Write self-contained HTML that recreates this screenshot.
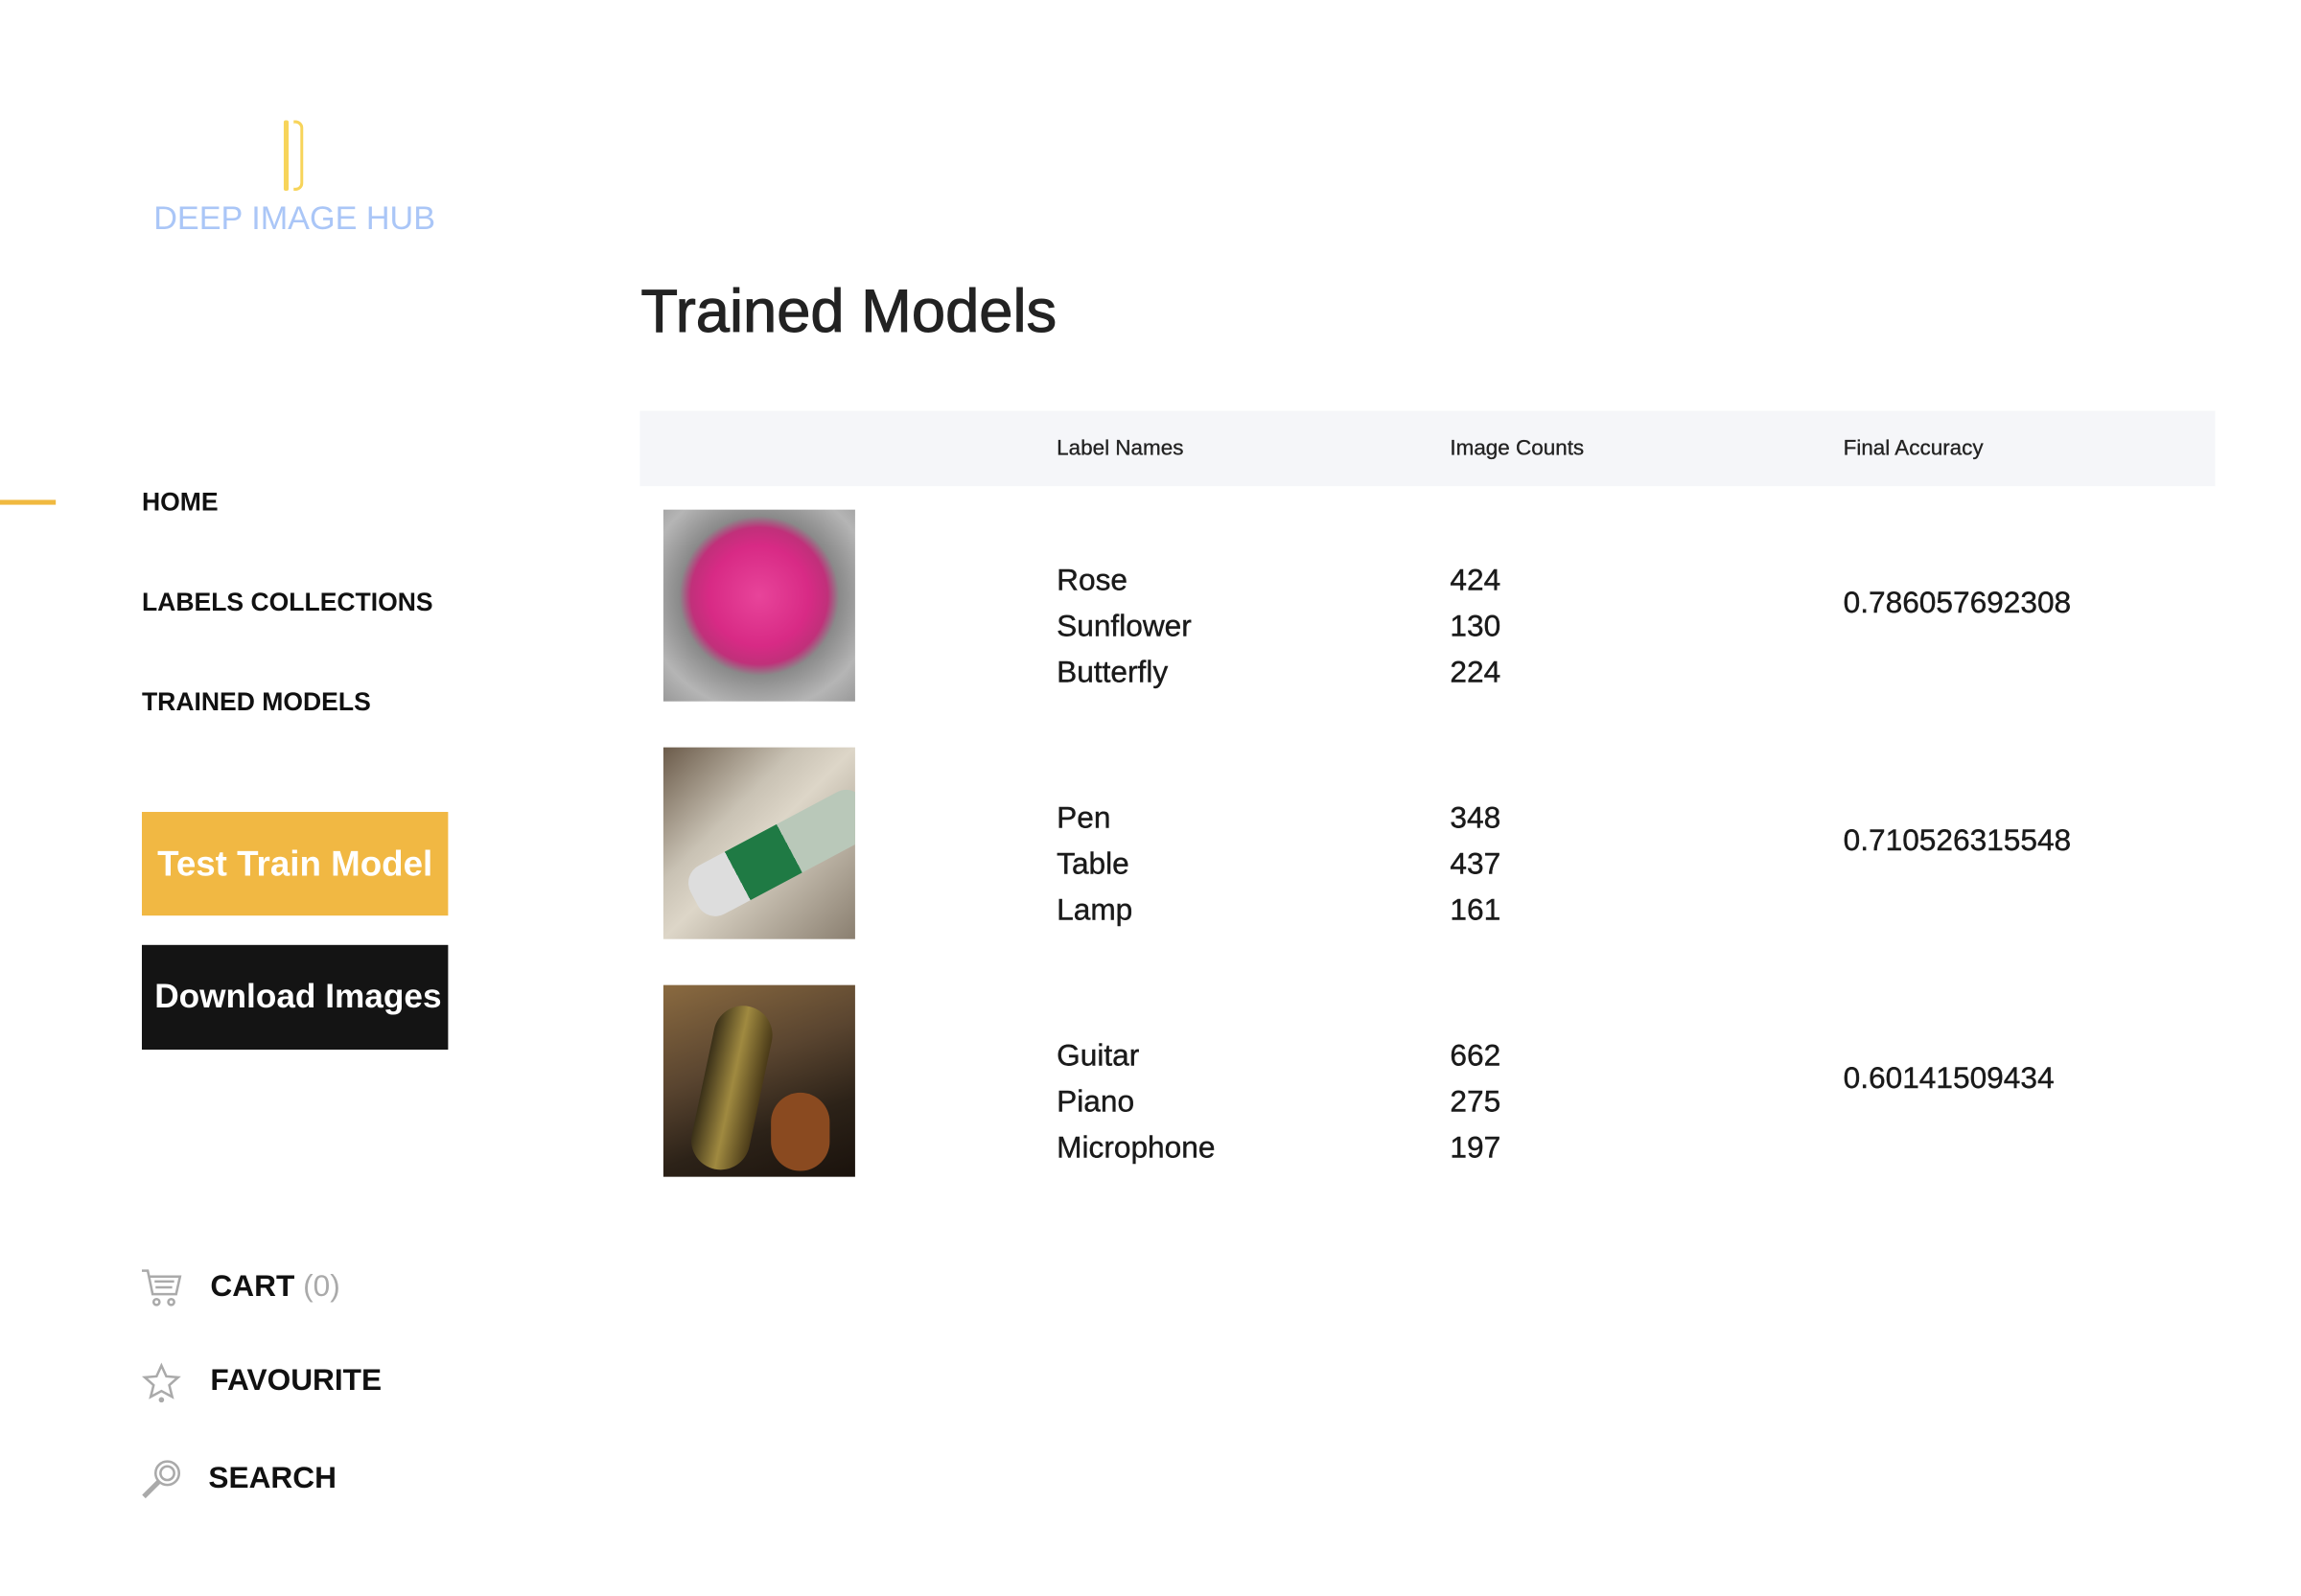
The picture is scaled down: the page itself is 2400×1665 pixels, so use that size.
<!DOCTYPE html>
<html><head><meta charset="utf-8"><style>
*{margin:0;padding:0;box-sizing:border-box}
body{width:2400px;height:1632px;background:#fff;position:relative;overflow:hidden;font-family:"Liberation Sans",Arial,sans-serif;color:#111}
#w{position:absolute;left:0;top:0;width:2400px;height:1632px;transform:scale(1.0205);transform-origin:0 0}
.a{position:absolute;white-space:nowrap}
.nav{font-size:26px;font-weight:bold;color:#111;line-height:30px}
.cell{font-size:31px;color:#1a1a1a;line-height:47px;-webkit-text-stroke:0.4px #1a1a1a}
.hd{font-size:22px;color:#222;line-height:26px;-webkit-text-stroke:0.3px #222}
.img{position:absolute;width:196px;height:196px;overflow:hidden}
</style></head><body><div id="w">
<div class="a" style="left:290px;top:123px;width:5px;height:72px;background:#f7d45a;border-radius:2px"></div>
<div class="a" style="left:300px;top:123px;width:10px;height:72px;border:3px solid #f7d45a;border-left:none;border-radius:0 8px 8px 0"></div>
<div class="a" style="left:157px;top:204px;font-size:33.5px;color:#aac6f7;line-height:40px">DEEP IMAGE HUB</div>

<div class="a" style="left:0;top:511px;width:57px;height:5px;background:#f0b940"></div>
<div class="a nav" style="left:145px;top:498px">HOME</div>
<div class="a nav" style="left:145px;top:600px">LABELS COLLECTIONS</div>
<div class="a nav" style="left:145px;top:702px">TRAINED MODELS</div>

<div class="a" style="left:145px;top:830px;width:313px;height:106px;background:#f1b843;color:#fff;font-size:36px;font-weight:bold;line-height:106px;text-align:center">Test Train Model</div>
<div class="a" style="left:145px;top:966px;width:313px;height:107px;background:#141414;color:#fff;font-size:34.5px;font-weight:bold;line-height:107px;padding-left:13px;overflow:hidden">Download Images</div>

<svg class="a" style="left:143px;top:1295px" width="44" height="42" viewBox="0 0 44 42" fill="none" stroke="#aaa" stroke-width="2.5"><path d="M2 4h6l5 24h24l4-18H10"/><path d="M15 15h20M16 21h17"/><circle cx="17" cy="36" r="3"/><circle cx="32" cy="36" r="3"/></svg>
<div class="a" style="left:215px;top:1297px;font-size:31px;font-weight:bold;line-height:36px">CART <span style="color:#aaa;font-weight:normal">(0)</span></div>
<svg class="a" style="left:143px;top:1390px" width="44" height="44" viewBox="0 0 44 44" fill="none" stroke="#aaa" stroke-width="2.5"><path d="M22 6l5 11 12 1-9 8 3 12-11-6-11 6 3-12-9-8 12-1z"/><circle cx="22" cy="41" r="1.5" fill="#aaa"/></svg>
<div class="a" style="left:215px;top:1393px;font-size:31px;font-weight:bold;line-height:36px">FAVOURITE</div>
<svg class="a" style="left:143px;top:1490px" width="44" height="44" viewBox="0 0 44 44" fill="none" stroke="#aaa" stroke-width="2.5"><circle cx="28" cy="16" r="12"/><circle cx="28" cy="16" r="7"/><path d="M19 25L4 40" stroke-width="5"/></svg>
<div class="a" style="left:213px;top:1493px;font-size:31px;font-weight:bold;line-height:36px">SEARCH</div>

<div class="a" style="left:655px;top:282px;font-size:62px;color:#222;line-height:74px;-webkit-text-stroke:1px #222">Trained Models</div>

<div class="a" style="left:654px;top:420px;width:1610px;height:77px;background:#f5f6f9"></div>
<div class="a hd" style="left:1080px;top:445px">Label Names</div>
<div class="a hd" style="left:1482px;top:445px">Image Counts</div>
<div class="a hd" style="left:1884px;top:445px">Final Accuracy</div>

<div class="img" style="left:678px;top:521px;background:radial-gradient(circle at 50% 45%,#e8449a 0,#d82a85 35%,#c0307a 48%,#8a8a8a 56%,#b5b5b5 80%,#999 100%)"></div>
<div class="img" style="left:678px;top:764px;background:linear-gradient(135deg,#6b5b4a 0,#c9c2b4 35%,#ddd6c8 50%,#8a7f70 100%)"><div style="position:absolute;left:20px;top:80px;width:200px;height:56px;background:linear-gradient(90deg,#ddd 0,#ddd 25%,#1f7a44 25%,#1f7a44 55%,#b9c8b9 55%);transform:rotate(-28deg);border-radius:20px"></div></div>
<div class="img" style="left:678px;top:1007px;background:linear-gradient(160deg,#8a6a40 0,#5a4530 40%,#2c2218 70%,#1a120c 100%)"><div style="position:absolute;left:40px;top:20px;width:60px;height:170px;background:linear-gradient(90deg,#3a3018,#a08a40,#4a3a18);transform:rotate(12deg);border-radius:30px"></div><div style="position:absolute;left:110px;top:110px;width:60px;height:80px;background:#8a4a20;border-radius:30px"></div></div>

<div class="a cell" style="left:1080px;top:569px">Rose<br>Sunflower<br>Butterfly</div>
<div class="a cell" style="left:1482px;top:569px">424<br>130<br>224</div>
<div class="a cell" style="left:1884px;top:592px">0.786057692308</div>

<div class="a cell" style="left:1080px;top:812px">Pen<br>Table<br>Lamp</div>
<div class="a cell" style="left:1482px;top:812px">348<br>437<br>161</div>
<div class="a cell" style="left:1884px;top:835px">0.710526315548</div>

<div class="a cell" style="left:1080px;top:1055px">Guitar<br>Piano<br>Microphone</div>
<div class="a cell" style="left:1482px;top:1055px">662<br>275<br>197</div>
<div class="a cell" style="left:1884px;top:1078px">0.60141509434</div>
</div></body></html>
